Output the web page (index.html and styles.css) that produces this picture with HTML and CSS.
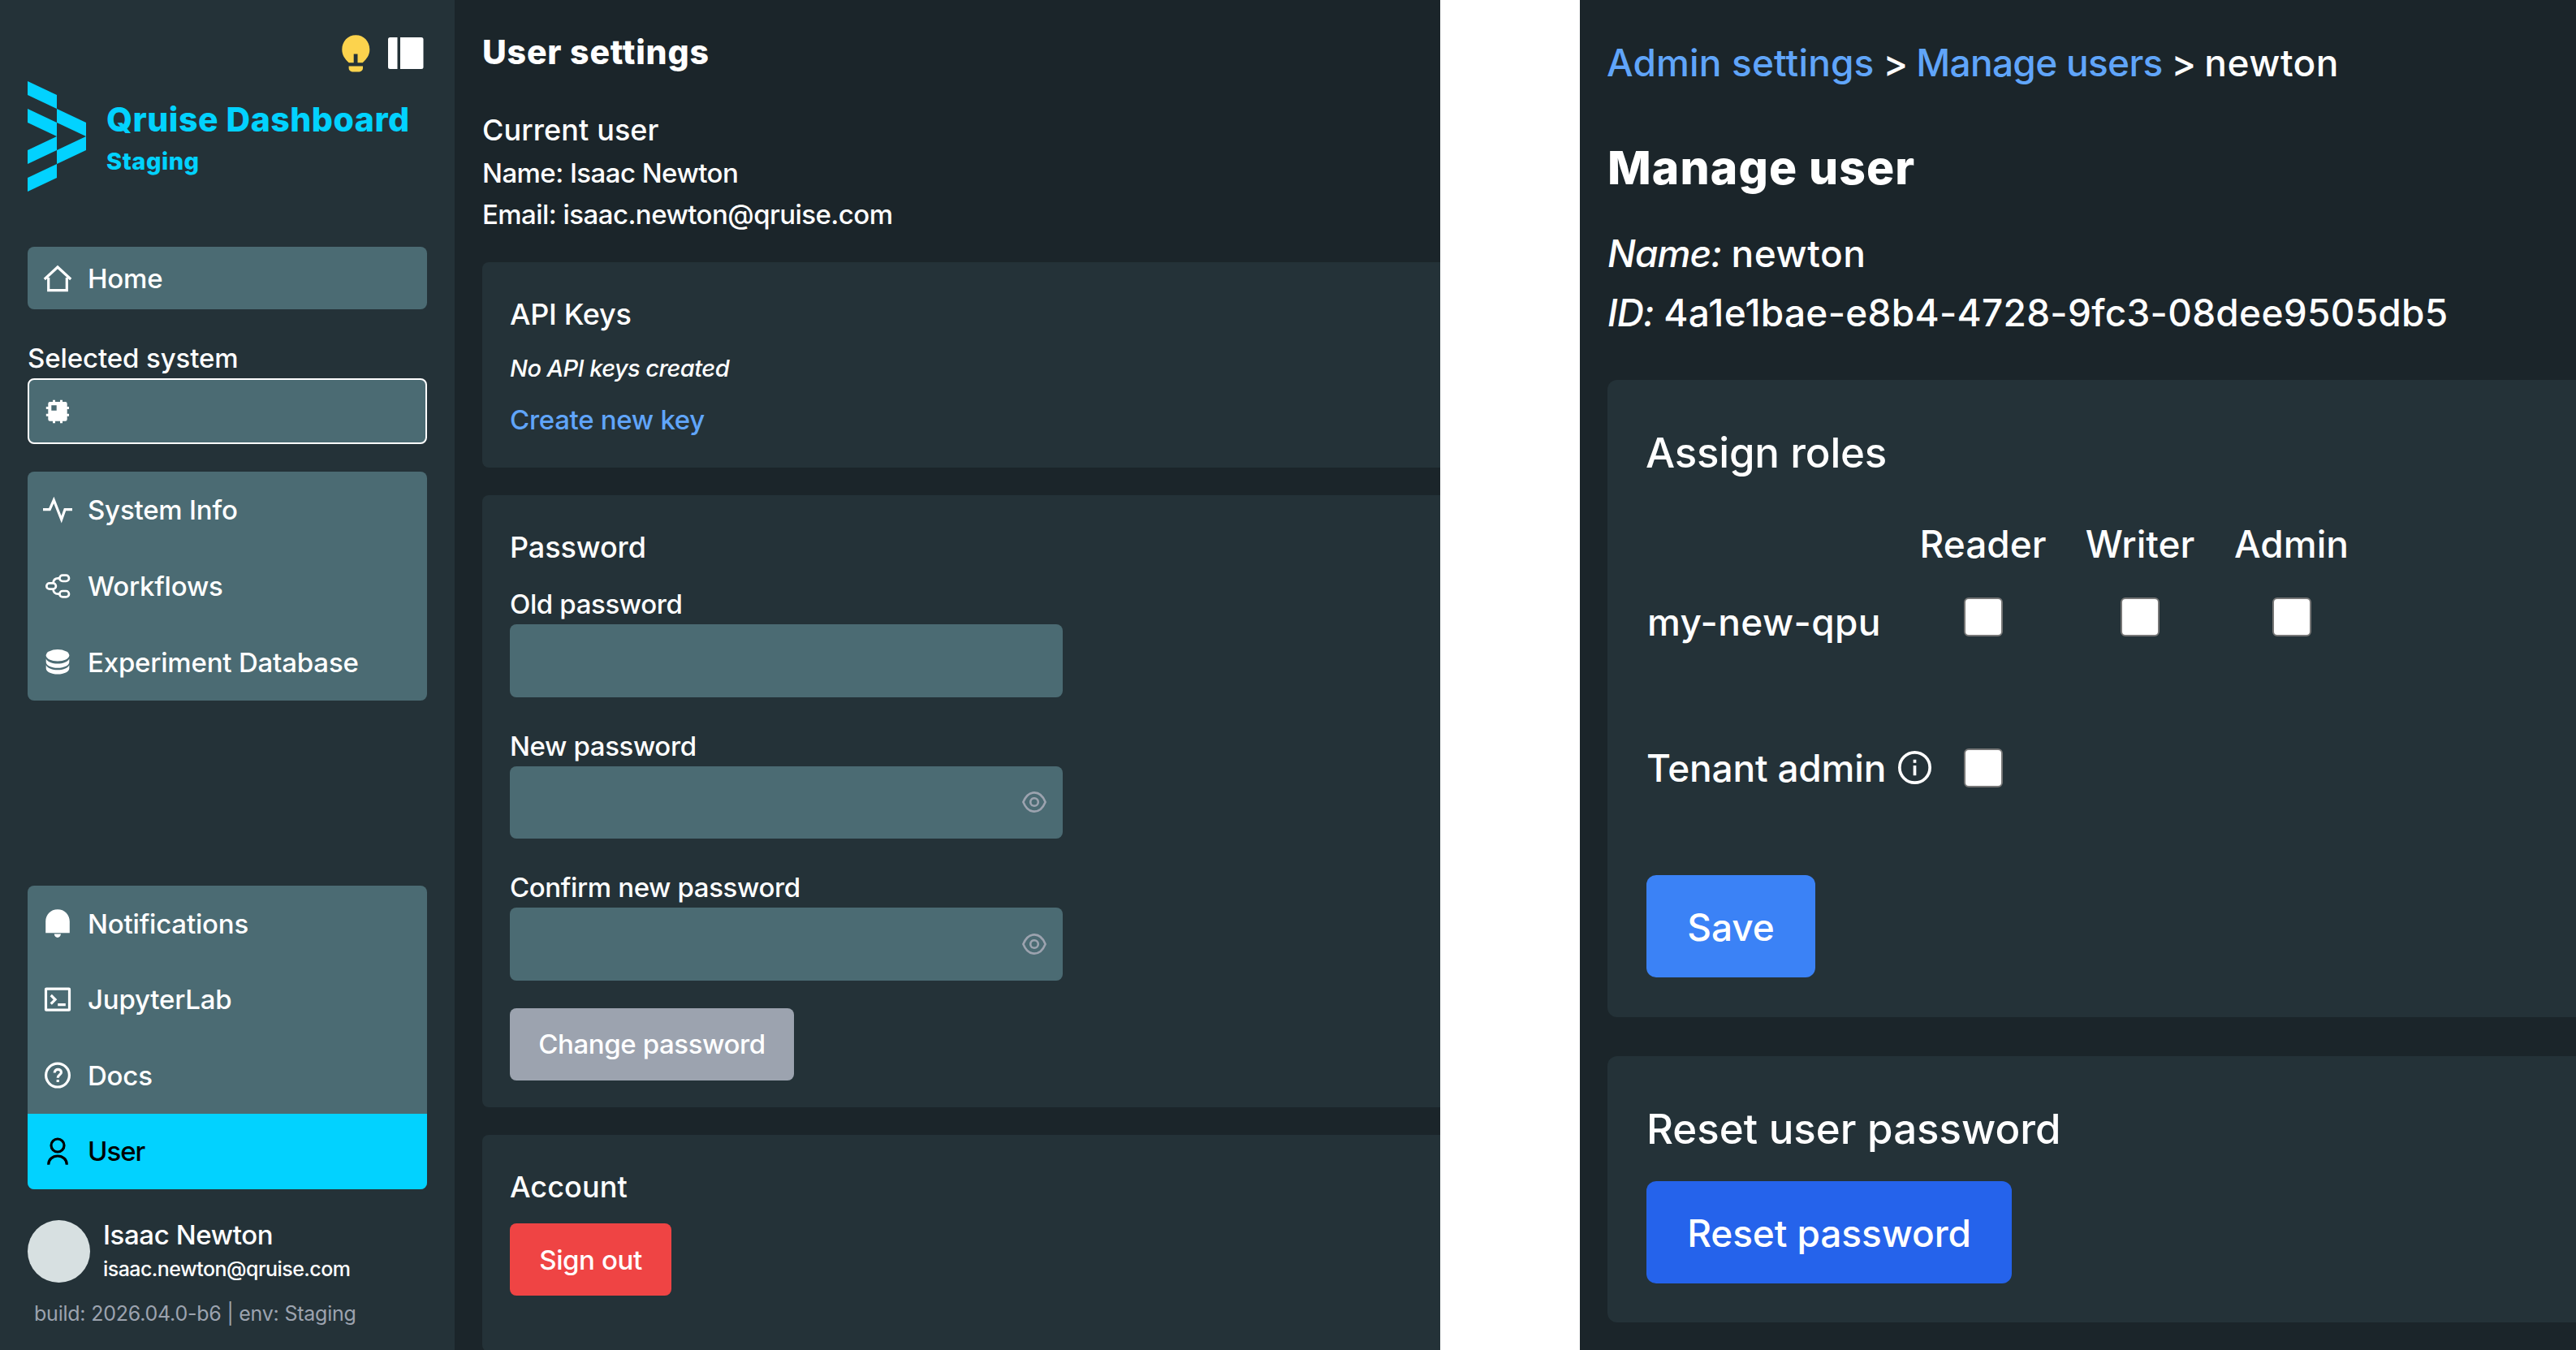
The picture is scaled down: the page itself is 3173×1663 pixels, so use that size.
FILE: index.html
```
<!DOCTYPE html>
<html lang="en">
<head>
    <meta charset="UTF-8">
    <meta name="viewport" content="width=device-width, initial-scale=1.0">
    <title>Qruise Dashboard</title>
    <link rel="stylesheet" href="styles.css">
</head>
<body>

<!-- User settings page -->
<div class="dashboard">
    <aside class="sidebar">
        <div class="sidebar-tools">
            <svg class="icon-bulb" viewBox="0 0 35 46">
                <path d="M17.3 0.3C7.5 0.3 0.3 8 0.3 18c0 7 3.4 11.4 8.4 16.3h6V23.5h4.8v10.8h6.2c5-4.9 8.6-9.3 8.6-16.3C34.3 8 27 0.3 17.3 0.3z"/>
                <path d="M8.6 38.4h17.4v2.6a4.4 4.4 0 0 1-4.4 4.4h-8.6a4.4 4.4 0 0 1-4.4-4.4z"/>
            </svg>
            <svg class="icon-panel" viewBox="0 0 44 39">
                <path d="M2.5 0H11.5V39H2.5A2.5 2.5 0 0 1 0 36.5V2.5A2.5 2.5 0 0 1 2.5 0z"/>
                <path d="M15 0H41a2.5 2.5 0 0 1 2.5 2.5V36.5A2.5 2.5 0 0 1 41 39H15z"/>
            </svg>
        </div>

        <div class="brand">
            <svg class="logo" viewBox="0 0 72 136">
                <path d="M0 0L36 17V34L0 17z"/>
                <path d="M0 34L36 51V68L0 51z"/>
                <path d="M36 34L72 51V68L36 51z"/>
                <path d="M72 68V85L36 102V85z"/>
                <path d="M36 68V85L0 102V85z"/>
                <path d="M36 102V119L0 136V119z"/>
            </svg>
            <div class="brand-text">
                <div class="brand-title">Qruise Dashboard</div>
                <div class="brand-env">Staging</div>
            </div>
        </div>

        <nav class="menu menu-home">
            <a class="menu-item">
                <svg class="icon line" viewBox="0 0 40 40"><path d="M3.8 21L20 6L36.2 21M8.7 19V34.7H31.3V19"/></svg>
                <span>Home</span>
            </a>
        </nav>

        <div class="select-label">Selected system</div>
        <div class="system-select">
            <svg class="icon solid" viewBox="0 0 40 40">
                <path fill-rule="evenodd" d="M10.5 8H14V5.8H17V8H23V5.8H26V8H29.5A2.2 2.2 0 0 1 31.7 10.2V14H34V17H31.7V22.7H34V25.7H31.7V29.5A2.2 2.2 0 0 1 29.5 31.7H26V34.2H23V31.7H17V34.2H14V31.7H10.5A2.2 2.2 0 0 1 8.3 29.5V25.7H5.8V22.7H8.3V17H5.8V14H8.3V10.2A2.2 2.2 0 0 1 10.5 8zM12.3 12.3V18.7H18.7V12.3z"/>
            </svg>
        </div>

        <nav class="menu menu-system">
            <a class="menu-item">
                <svg class="icon line" viewBox="0 0 40 40"><path d="M2 19.7H10.2L15.3 8L24.7 32L29 19.7H38"/></svg>
                <span>System Info</span>
            </a>
            <a class="menu-item">
                <svg class="icon line thin" viewBox="0 0 40 40">
                    <rect x="6.3" y="16.3" width="11.6" height="7.4" rx="3.7"/>
                    <rect x="22.4" y="6.6" width="11.6" height="7.4" rx="3.7"/>
                    <rect x="22.4" y="26" width="11.6" height="7.4" rx="3.7"/>
                    <path d="M22 10.3H20.5Q15 10.5 14.5 16M14.5 24Q15 29.5 20.5 29.7H22"/>
                </svg>
                <span>Workflows</span>
            </a>
            <a class="menu-item">
                <svg class="icon solid" viewBox="0 0 40 40">
                    <ellipse cx="20" cy="11.3" rx="14.3" ry="7.3"/>
                    <path d="M5.7 15.5c2 4 8 6 14.3 6s12.3-2 14.3-6v4c0 4.3-6.4 7.3-14.3 7.3s-14.3-3-14.3-7.3z"/>
                    <path d="M5.7 23.2c2 4 8 6 14.3 6s12.3-2 14.3-6v4c0 4.3-6.4 7.3-14.3 7.3s-14.3-3-14.3-7.3z"/>
                </svg>
                <span>Experiment Database</span>
            </a>
        </nav>

        <nav class="menu menu-bottom">
            <a class="menu-item">
                <svg class="icon solid" viewBox="0 0 40 40"><path d="M5.2 31.2V17C5.2 8.5 11.5 2.2 20 2.2S34.8 8.5 34.8 17V31.2zM15.7 32.6H24Q23.2 36.9 19.9 36.9T15.7 32.6z"/></svg>
                <span>Notifications</span>
            </a>
            <a class="menu-item">
                <svg class="icon line" viewBox="0 0 40 40"><rect x="5.5" y="7.2" width="29" height="26" rx="0.5"/><path d="M11.7 15L17 20.3L11.7 25.6M20.2 26.7H29.8"/></svg>
                <span>JupyterLab</span>
            </a>
            <a class="menu-item">
                <svg class="icon line" viewBox="0 0 40 40"><circle cx="20" cy="19.6" r="14.4"/><path d="M16.2 16.6C16.2 10.8 24.6 11.2 24.4 16.2C24.2 19.3 20.2 19 20.2 22.8M20.2 25V28"/></svg>
                <span>Docs</span>
            </a>
            <a class="menu-item active">
                <svg class="icon line" viewBox="0 0 40 40"><circle cx="20" cy="13" r="8"/><path d="M8.7 36.7C8.7 30.5 13.5 26 20 26S31.3 30.5 31.3 36.7"/></svg>
                <span>User</span>
            </a>
        </nav>

        <div class="profile">
            <div class="avatar"></div>
            <div class="profile-text">
                <div class="profile-name">Isaac Newton</div>
                <div class="profile-email">isaac.newton@qruise.com</div>
            </div>
        </div>
        <div class="build">build: 2026.04.0-b6 | env: Staging</div>
    </aside>

    <main class="settings">
        <h1>User settings</h1>
        <h2>Current user</h2>
        <p class="user-line">Name: Isaac Newton</p>
        <p class="user-line">Email: isaac.newton@qruise.com</p>

        <section class="card card-keys">
            <h2>API Keys</h2>
            <p class="empty">No API keys created</p>
            <a class="link create-key">Create new key</a>
        </section>

        <section class="card card-password">
            <h2>Password</h2>
            <div class="field">
                <label>Old password</label>
                <div class="input"></div>
            </div>
            <div class="field">
                <label>New password</label>
                <div class="input">
                    <svg class="icon-eye" viewBox="0 0 32 28"><path d="M2.4 14C5 7.5 9.7 2.4 16 2.4S27 7.5 29.6 14C27 20.5 22.3 25.6 16 25.6S5 20.5 2.4 14z"/><circle cx="16" cy="14" r="4.8"/></svg>
                </div>
            </div>
            <div class="field">
                <label>Confirm new password</label>
                <div class="input">
                    <svg class="icon-eye" viewBox="0 0 32 28"><path d="M2.4 14C5 7.5 9.7 2.4 16 2.4S27 7.5 29.6 14C27 20.5 22.3 25.6 16 25.6S5 20.5 2.4 14z"/><circle cx="16" cy="14" r="4.8"/></svg>
                </div>
            </div>
            <button class="btn btn-disabled">Change password</button>
        </section>

        <section class="card card-account">
            <h2>Account</h2>
            <button class="btn btn-danger">Sign out</button>
        </section>
    </main>
</div>

<!-- Admin page for a single user -->
<main class="admin">
    <div class="breadcrumb">
        <a class="link crumb-admin">Admin settings</a>
        <span class="sep">&gt;</span>
        <a class="link crumb-users">Manage users</a>
        <span class="sep">&gt;</span>
        <span class="crumb-name">newton</span>
    </div>

    <h1>Manage user</h1>
    <p class="info-line"><em>Name:</em> <span class="info-name">newton</span></p>
    <p class="info-line"><em>ID:</em> <span class="info-id">4a1e1bae-e8b4-4728-9fc3-08dee9505db5</span></p>

    <section class="card card-roles">
        <h2>Assign roles</h2>
        <div class="roles">
            <span></span>
            <span class="role">Reader</span>
            <span class="role">Writer</span>
            <span class="role">Admin</span>
            <span class="qpu">my-new-qpu</span>
            <span class="checkbox"></span>
            <span class="checkbox"></span>
            <span class="checkbox"></span>
        </div>
        <div class="tenant">
            <span>Tenant admin</span>
            <svg class="icon-info" viewBox="0 0 40 40"><circle cx="20" cy="20" r="18.2"/><path d="M20 10.5V14.5M20 17.5V29.5"/></svg>
            <span class="checkbox"></span>
        </div>
        <button class="btn btn-save">Save</button>
    </section>

    <section class="card card-reset">
        <h2>Reset user password</h2>
        <button class="btn btn-reset">Reset password</button>
    </section>
</main>

</body>
</html>
```
FILE: styles.css
```
* {
    box-sizing: border-box;
}
body {
    display: flex;
    gap: 172px;
    height: 1663px;
    margin: 0;
    overflow: hidden;
    background-color: #fff;
    font-family: Inter, "Liberation Sans", sans-serif;
    font-weight: 500;
    color: #fff;
}
h1, h2, p {
    margin: 0;
}
h2 {
    font-weight: 500;
}
svg {
    display: block;
    flex-shrink: 0;
}
.link {
    color: #60a5fa;
}

/* Left screen */
.dashboard {
    display: flex;
    flex: 0 0 1774px;
    background-color: #1b252a;
    overflow: hidden;
    font-size: 33px;
    line-height: 40px;
    letter-spacing: -0.2px;
}
.sidebar {
    display: flex;
    flex-direction: column;
    width: 560px;
    padding: 42px 34px 0;
    background-color: #243238;
}
.sidebar-tools {
    display: flex;
    justify-content: flex-end;
    align-items: center;
    gap: 22px;
    height: 47px;
    padding-right: 4px;
}
.icon-bulb {
    width: 35px;
    height: 46px;
    fill: #fcd34d;
}
.icon-panel {
    width: 44px;
    height: 39px;
    fill: #fff;
}
.brand {
    display: flex;
    gap: 25px;
    height: 136px;
    margin-top: 11px;
    color: #02d2ff;
    font-weight: 800;
}
.logo {
    width: 72px;
    height: 136px;
    fill: #02d2ff;
}
.brand-text {
    padding-top: 22px;
    white-space: nowrap;
}
.brand-title {
    font-size: 41px;
    line-height: 50px;
    letter-spacing: 0.5px;
}
.brand-env {
    margin-top: 7px;
    font-size: 29px;
    letter-spacing: 0.5px;
}

/* Sidebar menus */
.menu {
    border-radius: 8px;
    background-color: #4b6b73;
    overflow: hidden;
}
.menu-item {
    display: flex;
    align-items: center;
    gap: 17px;
    padding-left: 17px;
}
.menu-home {
    margin-top: 68px;
}
.menu-home .menu-item {
    height: 77px;
}
.menu-system {
    margin-top: 34px;
}
.menu-system .menu-item {
    height: 94px;
}
.menu-bottom {
    margin-top: 228px;
}
.menu-bottom .menu-item {
    height: 93.5px;
}
.menu-item.active {
    background-color: #02d2ff;
    color: #000;
    letter-spacing: -1px;
}
.icon {
    width: 40px;
    height: 40px;
}
.icon.line {
    fill: none;
    stroke: currentColor;
    stroke-width: 3.2;
}
.icon.thin {
    stroke-width: 2.7;
}
.icon.solid {
    fill: currentColor;
}
.select-label {
    margin-top: 40px;
    letter-spacing: -0.1px;
}
.system-select {
    display: flex;
    align-items: center;
    height: 81px;
    margin-top: 5px;
    padding-left: 15px;
    border: 2px solid #fff;
    border-radius: 8px;
    background-color: #4b6b73;
}

/* Sidebar footer */
.profile {
    display: flex;
    gap: 16px;
    height: 77px;
    margin-top: 38px;
}
.avatar {
    width: 77px;
    height: 77px;
    border-radius: 50%;
    background-color: #d7e0e1;
}
.profile-text {
    margin-top: -2px;
}
.profile-name {
    letter-spacing: -0.4px;
}
.profile-email {
    margin-top: 4px;
    font-size: 25px;
    line-height: 36px;
    letter-spacing: -0.55px;
}
.build {
    margin: 20px 0 0 8px;
    font-size: 25px;
    font-weight: 400;
    line-height: 36px;
    letter-spacing: -0.23px;
    color: #9ca3af;
}

/* Settings content */
.settings {
    flex: 1;
    padding: 39px 0 0 34px;
}
.settings h1 {
    font-size: 41px;
    font-weight: 800;
    line-height: 50px;
    letter-spacing: 0.8px;
}
.settings h2 {
    font-size: 36px;
    line-height: 44px;
    letter-spacing: 0.1px;
}
.settings > h2 {
    margin: 49px 0 6px;
}
.user-line {
    line-height: 50.5px;
    letter-spacing: -0.55px;
}
.card {
    border-radius: 8px;
    background-color: #243238;
}
.settings .card {
    margin-top: 34px;
    padding: 42px 34px 0;
    border-radius: 8px 0 0 8px;
}
.card-keys {
    height: 253px;
}
.settings .card-keys h2 {
    letter-spacing: -0.3px;
}
.empty {
    margin-top: 25px;
    font-size: 29px;
    font-style: italic;
    letter-spacing: -0.55px;
}
.create-key {
    display: block;
    margin-top: 23px;
    letter-spacing: -0.3px;
}
.card-password {
    height: 754px;
}
.settings .card-password h2 {
    margin-bottom: 28px;
    letter-spacing: -0.1px;
}
.field {
    width: 681px;
    margin-bottom: 40px;
}
.field label {
    display: block;
    letter-spacing: -0.38px;
}
.input {
    display: flex;
    justify-content: flex-end;
    align-items: center;
    height: 89.5px;
    margin-top: 5px;
    padding-right: 19px;
    border-radius: 8px;
    background-color: #4b6b73;
}
.icon-eye {
    width: 32px;
    height: 28px;
    fill: none;
    stroke: #9ca3af;
    stroke-width: 2.6;
}

/* Buttons */
.btn {
    display: block;
    height: 89px;
    padding: 0;
    border: none;
    border-radius: 8px;
    color: #fff;
    font: inherit;
    letter-spacing: -0.4px;
}
.btn-disabled {
    width: 350px;
    margin-top: -6px;
    background-color: #9ca3af;
}
.btn-danger {
    width: 199px;
    margin-top: 23px;
    background-color: #ef4444;
}
.card-account {
    height: 267px;
}

/* Right screen */
.admin {
    flex: 1;
    padding: 47px 0 0 34px;
    background-color: #1b252a;
    font-size: 46px;
    line-height: 60px;
    white-space: nowrap;
}
.breadcrumb {
    display: flex;
    gap: 11px;
    margin-left: -1px;
}
.crumb-admin {
    letter-spacing: 0.15px;
}
.crumb-users {
    letter-spacing: -0.7px;
}
.sep {
    letter-spacing: -1px;
}
.crumb-name, .info-name {
    letter-spacing: 0.5px;
}
.admin h1 {
    margin-top: 65px;
    font-size: 57px;
    font-weight: 800;
    line-height: 70px;
    letter-spacing: 1.1px;
}
.info-line {
    line-height: 72.5px;
}
.info-line em {
    letter-spacing: -0.9px;
}
.admin h1 + .info-line {
    margin-top: 34px;
}
.info-id {
    letter-spacing: 0.28px;
}
.admin .card {
    padding: 59px 0 0 48px;
    border-radius: 12px 0 0 12px;
}
.admin .card h2 {
    font-size: 51px;
    line-height: 62px;
}
.admin .card-roles h2 {
    margin-left: -1px;
    letter-spacing: -0.2px;
}
.card-roles {
    height: 785px;
    margin-top: 47px;
}
.roles {
    display: grid;
    grid-template-columns: 314px 201px 186px 187px;
    row-gap: 36px;
    justify-items: center;
    margin-top: 51px;
}
.qpu {
    justify-self: start;
    padding-left: 1px;
    letter-spacing: 0.4px;
}
.checkbox {
    width: 48px;
    height: 48px;
    border: 2px solid #767676;
    border-radius: 6px;
    background-color: #fff;
}
.tenant {
    display: flex;
    align-items: center;
    margin-top: 120px;
    letter-spacing: -0.2px;
}
.icon-info {
    width: 41px;
    height: 41px;
    margin: 0 40px 1px 15px;
    fill: none;
    stroke: #fff;
    stroke-width: 3.6;
}
.tenant .checkbox {
    margin-bottom: 1px;
}
.admin .btn {
    height: 126px;
    padding-top: 1px;
    border-radius: 12px;
    letter-spacing: -0.1px;
}
.btn-save {
    width: 208px;
    margin-top: 102px;
    background-color: #3b82f6;
}
.card-reset {
    height: 328px;
    margin-top: 48px;
}
.btn-reset {
    width: 450px;
    margin-top: 33px;
    background-color: #2563eb;
}
```
